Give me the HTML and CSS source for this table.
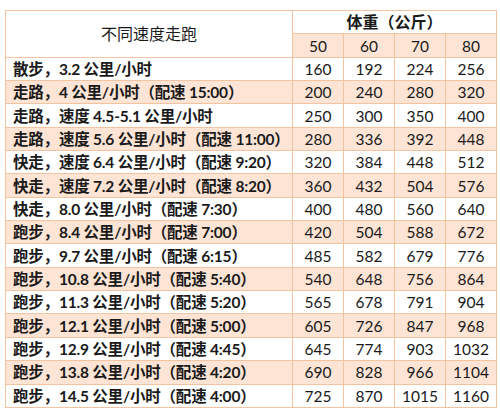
FILE: index.html
```html
<!DOCTYPE html>
<html lang="zh">
<head>
<meta charset="utf-8">
<link rel="stylesheet" href="styles.css">
</head>
<body>
<table class="tbl">
  <colgroup>
    <col class="c-name"><col class="c-num"><col class="c-num"><col class="c-num"><col class="c-num">
  </colgroup>
  <thead>
    <tr class="h1">
      <th rowspan="2" class="title">不同速度走跑</th>
      <th colspan="4" class="weight">体重（公斤）</th>
    </tr>
    <tr class="h2 shade">
      <th>50</th><th>60</th><th>70</th><th>80</th>
    </tr>
  </thead>
  <tbody>
    <tr><td class="name">散步，3.2 公里/小时</td><td>160</td><td>192</td><td>224</td><td>256</td></tr>
    <tr class="shade"><td class="name">走路，4 公里/小时（配速 15:00）</td><td>200</td><td>240</td><td>280</td><td>320</td></tr>
    <tr><td class="name">走路，速度 4.5-5.1 公里/小时</td><td>250</td><td>300</td><td>350</td><td>400</td></tr>
    <tr class="shade"><td class="name">走路，速度 5.6 公里/小时（配速 11:00）</td><td>280</td><td>336</td><td>392</td><td>448</td></tr>
    <tr><td class="name">快走，速度 6.4 公里/小时（配速 9:20）</td><td>320</td><td>384</td><td>448</td><td>512</td></tr>
    <tr class="shade"><td class="name">快走，速度 7.2 公里/小时（配速 8:20）</td><td>360</td><td>432</td><td>504</td><td>576</td></tr>
    <tr><td class="name">快走，8.0 公里/小时（配速 7:30）</td><td>400</td><td>480</td><td>560</td><td>640</td></tr>
    <tr class="shade"><td class="name">跑步，8.4 公里/小时（配速 7:00）</td><td>420</td><td>504</td><td>588</td><td>672</td></tr>
    <tr><td class="name">跑步，9.7 公里/小时（配速 6:15）</td><td>485</td><td>582</td><td>679</td><td>776</td></tr>
    <tr class="shade"><td class="name">跑步，10.8 公里/小时（配速 5:40）</td><td>540</td><td>648</td><td>756</td><td>864</td></tr>
    <tr><td class="name">跑步，11.3 公里/小时（配速 5:20）</td><td>565</td><td>678</td><td>791</td><td>904</td></tr>
    <tr class="shade"><td class="name">跑步，12.1 公里/小时（配速 5:00）</td><td>605</td><td>726</td><td>847</td><td>968</td></tr>
    <tr><td class="name">跑步，12.9 公里/小时（配速 4:45）</td><td>645</td><td>774</td><td>903</td><td>1032</td></tr>
    <tr class="shade"><td class="name">跑步，13.8 公里/小时（配速 4:20）</td><td>690</td><td>828</td><td>966</td><td>1104</td></tr>
    <tr><td class="name">跑步，14.5 公里/小时（配速 4:00）</td><td>725</td><td>870</td><td>1015</td><td>1160</td></tr>
  </tbody>
</table>
</body>
</html>
```
FILE: styles.css
```css
html, body {
  margin: 0;
  padding: 0;
  background: #ffffff;
}
body {
  padding: 10px 0 0 5px;
  font-family: "Lato", "Noto Sans CJK SC", sans-serif;
  color: #1a1a1a;
}
.tbl {
  border-collapse: collapse;
  width: 492px;
  table-layout: fixed;
}
.c-name { width: 287px; }
.c-num { width: 51px; }
.tbl th, .tbl td {
  border: 1px solid #f4c3a2;
  height: 22.35px;
  padding: 0;
  text-align: center;
  font-size: 15.5px;
  line-height: 18px;
  font-weight: 400;
  white-space: nowrap;
}
.tbl .title {
  font-size: 16px;
  font-weight: 400;
  background: #ffffff;
}
.tbl .weight {
  font-weight: 700;
  font-size: 16px;
}
.shade th, .shade td {
  background: #fde4d4;
}
.tbl td.name {
  text-align: left;
  padding-left: 7px;
  font-weight: 700;
  font-size: 15.5px;
  letter-spacing: -0.2px;
}
```
